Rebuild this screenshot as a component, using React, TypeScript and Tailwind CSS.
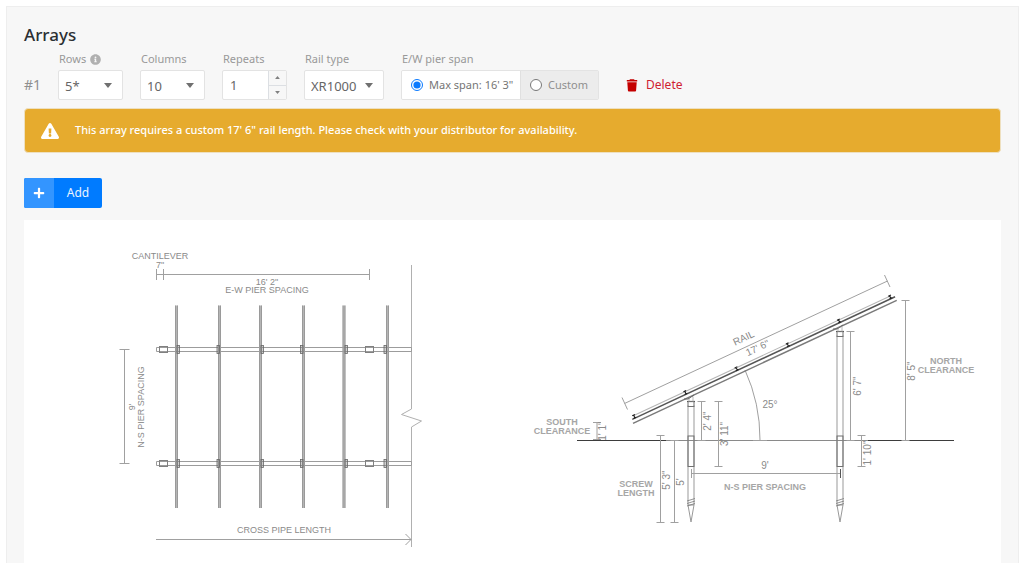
import type { ReactNode } from "react";
import { FaExclamationTriangle, FaInfoCircle, FaPlus } from "react-icons/fa";

const railXs = [176.5, 219.5, 260.5, 303.5, 344, 387.5];
const bracketXs = [177, 217, 261, 300.5, 345, 384];

function Caret({ className }: { className: string }) {
  return (
    <svg viewBox="0 0 8 5" className={className} aria-hidden="true">
      <path d="M0 0H8L4 5Z" fill="currentColor" />
    </svg>
  );
}

function TrashIcon({ className }: { className: string }) {
  return (
    <svg viewBox="0 0 12 13" className={className} fill="currentColor" aria-hidden="true">
      <path d="M4 0.3H8L8.6 1H11.2V2.4H0.8V1H3.4ZM1.3 3.2H10.7L10.1 11.6Q10 12.5 9.2 12.5H2.8Q2 12.5 1.9 11.6Z" />
    </svg>
  );
}

function Field({ id, label, children }: { id: string; label: ReactNode; children: ReactNode }) {
  return (
    <div className="flex flex-col gap-[3px]">
      <label htmlFor={id} className="flex h-4 items-center gap-1 pl-px text-[11px] text-[#999]">
        {label}
      </label>
      {children}
    </div>
  );
}

function Dropdown({ id, options, className }: { id: string; options: string[]; className: string }) {
  return (
    <div className={`relative ${className}`}>
      <select
        id={id}
        className="h-[30px] w-full appearance-none rounded-xs border border-[#e3e3e3] bg-white pt-1 pr-5 pl-1.5 text-[13px] text-[#666]"
      >
        {options.map((option) => (
          <option key={option}>{option}</option>
        ))}
      </select>
      <Caret className="pointer-events-none absolute top-[13px] right-[11px] h-[5px] w-2 text-[#707070]" />
    </div>
  );
}

function VDim({ x, y1, y2, tick = 4 }: { x: number; y1: number; y2: number; tick?: number }) {
  return <path d={`M${x} ${y1}V${y2}M${x - tick} ${y1}h${tick * 2}M${x - tick} ${y2}h${tick * 2}`} />;
}

function Note({ x, y, angle = 0, bold = false, children }: { x: number; y: number; angle?: number; bold?: boolean; children: ReactNode }) {
  return (
    <text
      transform={`translate(${x} ${y}) rotate(${angle})`}
      textAnchor="middle"
      className={bold ? "text-[9px] font-bold" : ""}
      fill={bold ? "#a6a6a6" : "#8a8a8a"}
      stroke="none"
    >
      {children}
    </text>
  );
}

function CrossPipe({ y }: { y: number }) {
  return (
    <g>
      <path d={`M156.5 ${y - 2}H411.5V${y + 2}H156.5Z`} stroke="#9c9c9c" />
      {[159.5, 365.5].map((x) => (
        <rect key={x} x={x} y={y - 3} width="8" height="6" stroke="#808080" />
      ))}
      {bracketXs.map((x) => (
        <rect key={x} x={x} y={y - 4} width="2.5" height="8" fill="#888" fillOpacity="0.4" stroke="#666" strokeWidth="0.8" />
      ))}
    </g>
  );
}

function PlanView() {
  return (
    <g stroke="#a0a0a0" className="text-[9px]">
      <path d="M156.5 274.5H369.5M156.5 269V280M163.5 269V280M369.5 269V280" />
      <path d="M411.5 265V409L401.5 414.5L421.5 421L411.5 427V547" stroke="#b0b0b0" />
      <VDim x={124.5} y1={349.5} y2={463.5} tick={5} />
      <path d="M156 539.5H411M405.5 534L411 539.5L405.5 545" />
      {railXs.map((x) => (
        <g key={x}>
          <path d={`M${x} 305.5V508`} stroke="#b5b5b5" strokeWidth="3" />
          <path d={`M${x - 1} 305.5V508M${x + 1} 305.5V508`} stroke="#888" strokeWidth="0.6" />
        </g>
      ))}
      <CrossPipe y={349.5} />
      <CrossPipe y={463.5} />
      <Note x={160} y={259}>CANTILEVER</Note>
      <Note x={160} y={268}>7"</Note>
      <Note x={267} y={285}>16' 2"</Note>
      <Note x={267} y={293}>E-W PIER SPACING</Note>
      <Note x={284} y={533}>CROSS PIPE LENGTH</Note>
      <Note x={135} y={407} angle={-90}>9'</Note>
      <Note x={144} y={407} angle={-90}>N-S PIER SPACING</Note>
    </g>
  );
}

function Pier({ x, top }: { x: number; top: number }) {
  return (
    <g>
      <path d={`M${x - 3} ${top + 4}V505L${x} 522L${x + 3} 505V${top + 4}`} stroke="#999" />
      <path d={`M${x - 3} 505H${x + 3}`} stroke="#999" />
      <path
        d={`M${x - 4} 501L${x + 4} 498.5M${x - 4} 503.5L${x + 4} 501M${x - 4} 506L${x + 4} 503.5`}
        stroke="#777"
        strokeWidth="0.8"
      />
      <rect x={x - 3} y="436" width="6" height="30.5" stroke="#707070" />
      <path d={`M${x - 4} ${top}H${x + 4}`} stroke="#444" strokeWidth="1.2" />
      <rect x={x - 3} y={top} width="6" height="5" stroke="#707070" />
      <path d={`M${x - 2} ${top}V${top - 3}L${x} ${top - 5}H${x + 2}V${top}`} stroke="#aaa" strokeWidth="0.8" />
      <path d={`M${x - 7} ${top - 2.5}H${x - 3}L${x + 3} ${top - 6.5}`} stroke="#666" />
    </g>
  );
}

function SideView() {
  return (
    <g stroke="#a0a0a0" className="text-[10px]">
      <path d="M666 440.5H868" stroke="#8a8a8a" />
      <path d="M577 440.5H666M868 440.5H954" stroke="#3d3d3d" strokeWidth="1.2" />
      <path d="M745 370A168 168 0 0 1 760 440M753 440.5H767" />
      <path d="M624.5 403.5L887.5 281M622 397.5L627.5 409.5M884.5 275L890 287" />
      <g transform="translate(634 416) rotate(-25)">
        <path d="M0 -0.5H283" stroke="#b5b5b5" />
        <path d="M-3 2.3H287" stroke="#555" strokeWidth="1.5" />
        <path d="M-4 6.2H287" stroke="#7a7a7a" strokeWidth="1.5" />
        {[0, 56.5, 113, 169.5, 226, 282.5].map((x) => (
          <path key={x} d={`M${x - 1.5} -1h3M${x} -1V2M${x - 1.5} 2h3`} stroke="#222" strokeWidth="1.1" />
        ))}
      </g>
      <Pier x={691} top={401.5} />
      <Pier x={840} top={331.5} />
      <VDim x={597} y1={422.5} y2={439.5} tick={4} />
      <VDim x={660.5} y1={435.5} y2={522.5} />
      <VDim x={674.5} y1={440.5} y2={522.5} />
      <VDim x={701.5} y1={401.5} y2={440.5} />
      <VDim x={718.5} y1={401.5} y2={466.5} />
      <VDim x={850.5} y1={331.5} y2={440.5} />
      <VDim x={861.5} y1={435.5} y2={466.5} />
      <VDim x={905.5} y1={300.5} y2={440.5} />
      <path d="M691.5 473.5H840.5M691.5 469V478" />
      <path d="M840.5 469V478" stroke="#555" />
      <Note x={562} y={425} bold>SOUTH</Note>
      <Note x={562} y={434} bold>CLEARANCE</Note>
      <Note x={636} y={487} bold>SCREW</Note>
      <Note x={636} y={496} bold>LENGTH</Note>
      <Note x={946} y={364} bold>NORTH</Note>
      <Note x={946} y={373} bold>CLEARANCE</Note>
      <Note x={765} y={490} bold>N-S PIER SPACING</Note>
      <Note x={765} y={469}>9'</Note>
      <Note x={770} y={408}>25°</Note>
      <Note x={745} y={341} angle={-25}>RAIL</Note>
      <Note x={759} y={351} angle={-25}>17' 6"</Note>
      <Note x={606} y={431} angle={-90}>1' 1"</Note>
      <Note x={670} y={480} angle={-90}>5' 3"</Note>
      <Note x={684} y={482} angle={-90}>5'</Note>
      <Note x={711} y={421} angle={-90}>2' 4"</Note>
      <Note x={728} y={434} angle={-90}>3' 11"</Note>
      <Note x={861} y={386} angle={-90}>6' 7"</Note>
      <Note x={871} y={453} angle={-90}>1' 10"</Note>
      <Note x={915} y={371} angle={-90}>8' 5"</Note>
    </g>
  );
}

export default function App() {
  return (
    <main className="bg-white pt-1.5 pr-[5px] pl-1.5 font-['Noto_Sans',sans-serif]">
      <section className="border border-b-0 border-[#eeeeee] bg-[#f7f7f7] px-[17px] pt-4">
        <h1 className="text-[17px] leading-6 font-medium text-[#2b2f33]">Arrays</h1>

        <div className="flex items-end gap-[17px] pt-1">
          <div className="flex h-[30px] w-[17px] items-center text-sm text-[#8f8f8f]">#1</div>
          <Field id="rows" label={<>Rows <FaInfoCircle className="size-[11px] text-[#b0b0b0]" /></>}>
            <Dropdown id="rows" options={["5*", "4", "3"]} className="w-[65px]" />
          </Field>
          <Field id="columns" label="Columns">
            <Dropdown id="columns" options={["10", "11", "12"]} className="w-[65px]" />
          </Field>
          <Field id="repeats" label="Repeats">
            <div className="flex h-[30px] w-[65px] overflow-hidden rounded-xs border border-[#e3e3e3] bg-white">
              <input id="repeats" defaultValue="1" inputMode="numeric" className="w-0 flex-1 pt-0.5 pl-[7px] text-[13px] text-[#666]" />
              <div className="flex w-[18px] flex-col border-l border-[#dcdfe3] bg-[#f7f7f7] text-[#808080]">
                <button type="button" aria-label="Increase repeats" className="flex flex-1 items-center justify-center border-b border-[#dcdfe3]">
                  <Caret className="h-[3px] w-[5px] rotate-180" />
                </button>
                <button type="button" aria-label="Decrease repeats" className="flex flex-1 items-center justify-center">
                  <Caret className="h-[3px] w-[5px]" />
                </button>
              </div>
            </div>
          </Field>
          <Field id="rail-type" label="Rail type">
            <Dropdown id="rail-type" options={["XR1000", "XR100"]} className="w-20" />
          </Field>
          <fieldset className="flex flex-col gap-[3px] text-[11px]">
            <legend className="float-left h-4 pl-px leading-4 text-[#999]">E/W pier span</legend>
            <div className="flex h-[30px] overflow-hidden rounded-xs border border-[#e3e3e3]">
              <label className="flex w-[118px] items-center gap-1.5 bg-white pl-[9px] whitespace-nowrap text-[#757575]">
                <input type="radio" name="span" defaultChecked className="size-3 accent-[#0a7aff]" />
                Max span: 16' 3"
              </label>
              <label className="flex w-[78px] items-center gap-1.5 border-l border-[#e0e0e0] bg-[#ececec] pl-[9px] text-[#8f8f8f]">
                <input type="radio" name="span" className="size-3" />
                Custom
              </label>
            </div>
          </fieldset>
          <button type="button" className="ml-2.5 flex h-[30px] items-center gap-2 text-xs text-[#cf2030]">
            <TrashIcon className="h-[13px] w-3 text-[#c40000]" />
            Delete
          </button>
        </div>

        <div role="alert" className="mt-2 flex h-[45px] items-center gap-4 rounded-sm border border-[#eee0c0] bg-[#e6ab2e] pl-4 text-[11px] font-medium text-white">
          <FaExclamationTriangle className="size-[18px] text-white" />
          This array requires a custom 17' 6" rail length. Please check with your distributor for availability.
        </div>

        <button type="button" className="mt-[25px] flex h-[30px] overflow-hidden rounded-xs bg-[#007bff] text-xs text-[#eaf4ff]">
          <span className="flex h-full w-[30px] items-center justify-center bg-[#3395ff]">
            <FaPlus className="size-3 text-white" />
          </span>
          <span className="flex h-full w-12 items-center justify-center">Add</span>
        </button>

        <div className="mt-3 bg-white">
          <svg
            viewBox="24 220 977 343"
            role="img"
            aria-label="Array plan and side elevation"
            className="block w-full font-['Liberation_Sans',sans-serif]"
            fill="none"
          >
            <PlanView />
            <SideView />
          </svg>
        </div>
      </section>
    </main>
  );
}
